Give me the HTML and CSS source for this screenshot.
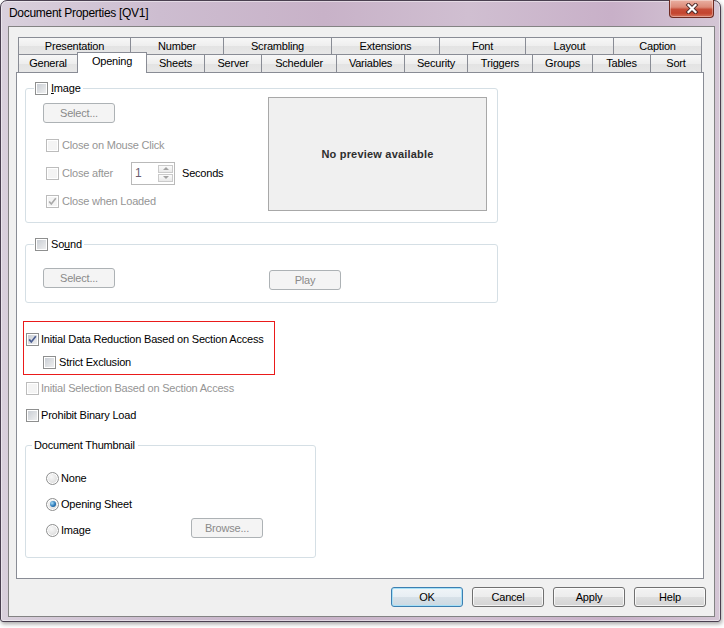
FILE: index.html
```html
<!DOCTYPE html>
<html>
<head>
<meta charset="utf-8">
<title>Document Properties [QV1]</title>
<link rel="stylesheet" href="styles.css">
</head>
<body>
<div class="window">
  <div class="titlebar">
    <span class="title">Document Properties [QV1]</span>
    <div class="close">
      <svg width="14" height="11" viewBox="0 0 14 11">
        <path d="M3.5 2 L10.5 9 M10.5 2 L3.5 9" stroke="#4a2a2a" stroke-width="4" stroke-linecap="square" fill="none"/>
        <path d="M3.5 2 L10.5 9 M10.5 2 L3.5 9" stroke="#ffffff" stroke-width="2.2" stroke-linecap="square" fill="none"/>
      </svg>
    </div>
  </div>
  <div class="client">
    <div class="tabs">
      <div class="tabrow row1">
        <div class="tab">Presentation</div>
        <div class="tab">Number</div>
        <div class="tab">Scrambling</div>
        <div class="tab">Extensions</div>
        <div class="tab">Font</div>
        <div class="tab">Layout</div>
        <div class="tab">Caption</div>
      </div>
      <div class="tabrow row2">
        <div class="tab">General</div>
        <div class="tab active">Opening</div>
        <div class="tab">Sheets</div>
        <div class="tab">Server</div>
        <div class="tab">Scheduler</div>
        <div class="tab">Variables</div>
        <div class="tab">Security</div>
        <div class="tab">Triggers</div>
        <div class="tab">Groups</div>
        <div class="tab">Tables</div>
        <div class="tab">Sort</div>
      </div>
    </div>
    <div class="panel">
      <div class="group g-image">
        <div class="legend"><span class="cb"></span><span><u>I</u>mage</span></div>
        <div class="gbody">
          <div class="col">
            <div class="btn dis first">Select...</div>
            <div class="row first"><span class="cb dis"></span><span class="lbl dis">Close on Mouse Click</span></div>
            <div class="row"><span class="cb dis"></span><span class="lbl dis w-after">Close after</span>
              <div class="spin"><span class="spinval">1</span>
                <div class="spinbtns"><span class="sb up"></span><span class="sb dn"></span></div>
              </div>
              <span class="lbl seconds">Seconds</span>
            </div>
            <div class="row"><span class="cb dis"><svg width="11" height="11" viewBox="0 0 11 11"><path d="M2.2 5.4 L4.3 8 L8.8 2.2" stroke="#a9a9a9" stroke-width="1.6" fill="none"/></svg></span><span class="lbl dis">Close when Loaded</span></div>
          </div>
          <div class="preview">No preview available</div>
        </div>
      </div>

      <div class="group g-sound">
        <div class="legend"><span class="cb"></span><span>So<u>u</u>nd</span></div>
        <div class="sbody">
          <div class="btn dis sel-btn">Select...</div>
          <div class="btn dis play-btn">Play</div>
        </div>
      </div>

      <div class="redbox">
        <div class="chk"><span class="cb"><svg width="11" height="11" viewBox="0 0 11 11"><path d="M2.2 5.4 L4.3 8 L8.8 2.2" stroke="#4b5e92" stroke-width="1.7" fill="none"/></svg></span><span class="lbl">Initial Data Reduction Based on Section Access</span></div>
        <div class="chk sub"><span class="cb"></span><span class="lbl">Strict Exclusion</span></div>
      </div>

      <div class="chk line sel-line"><span class="cb dis"></span><span class="lbl dis">Initial Selection Based on Section Access</span></div>
      <div class="chk line prohibit"><span class="cb"></span><span class="lbl">Prohibit Binary Load</span></div>

      <div class="group g-thumb">
        <div class="legend text-legend">Document Thumbnail</div>
        <div class="tbody">
          <div class="rrow"><span class="rb"></span><span class="lbl">None</span></div>
          <div class="rrow"><span class="rb on"></span><span class="lbl">Opening Sheet</span></div>
          <div class="rrow img"><span class="rb"></span><span class="lbl">Image</span><div class="btn dis browse">Browse...</div></div>
        </div>
      </div>
    </div>
    <div class="footer">
      <div class="btn default">OK</div>
      <div class="btn">Cancel</div>
      <div class="btn">Apply</div>
      <div class="btn">Help</div>
    </div>
  </div>
</div>
</body>
</html>
```

FILE: styles.css
```css
* { box-sizing: border-box; }
html, body { margin: 0; padding: 0; background: #ffffff; }
body {
  font-family: "Liberation Sans", Arial, sans-serif;
  font-size: 11px;
  letter-spacing: -0.2px;
  color: #000;
  width: 724px;
  height: 628px;
  overflow: hidden;
}

/* window frame */
.window {
  width: 721px;
  height: 622px;
  border: 1px solid #4a4050;
  border-radius: 7px 7px 3px 3px;
  background: linear-gradient(90deg, #d9d0dc 0%, #cdbdd0 22%, #c8b2c8 45%, #d0bfd1 65%, #c8b0c8 85%, #d4c6d5 100%);
  box-shadow: 1px 2px 4px rgba(0,0,0,.35), inset 0 0 0 1px rgba(255,255,255,.45);
  display: flex;
  flex-direction: column;
}
.titlebar {
  height: 25px;
  flex: none;
  display: flex;
  justify-content: space-between;
  align-items: flex-start;
  padding-left: 8px;
}
.title {
  font-size: 12px;
  letter-spacing: -0.3px;
  line-height: 24px;
  color: #000;
}
.close {
  width: 45px;
  height: 18px;
  margin-top: -1px;
  margin-right: 6px;
  border: 1px solid #6e2a22;
  border-top: none;
  border-radius: 0 0 4px 4px;
  background: linear-gradient(#eab0a2 0%, #dc8a78 42%, #c64d38 55%, #c4452f 78%, #d6735c 100%);
  box-shadow: inset 0 0 0 1px rgba(255,255,255,.35);
  display: flex;
  align-items: center;
  justify-content: center;
}

/* client area */
.client {
  margin-left: 7px;
  width: 707px;
  height: 591px;
  flex: none;
  border: 1px solid #838383;
  background: #f0f0f0;
  padding-top: 10px;
}

/* tabs */
.tabs { margin-left: 9px; width: 684px; }
.tabrow { display: grid; }
.row1 { grid-template-columns: 113px 93px 108px 108px 86px 88px 88px; height: 17px; }
.row2 { grid-template-columns: 60px 69px 58px 57px 75px 68px 63px 65px 60px 58px 51px; height: 18px; }
.tab {
  border-top: 1px solid #898c95;
  border-right: 1px solid #898c95;
  background: linear-gradient(#f7f7f7 0%, #eeeeee 50%, #e3e3e3 51%, #e7e7e7 100%);
  text-align: center;
  line-height: 16px;
  white-space: nowrap;
}
.tab:first-child { border-left: 1px solid #898c95; }
.row2 .tab { line-height: 17px; }
.tab.active {
  background: #ffffff;
  margin: -2px 0 -1px -1px;
  border-left: 1px solid #898c95;
  position: relative;
  z-index: 1;
  line-height: 16px;
}

/* panel */
.panel {
  margin-left: 7px;
  width: 688px;
  height: 507px;
  border: 1px solid #898c95;
  background: #fff;
  display: flow-root;
}

.group {
  border: 1px solid #d5dfe5;
  border-radius: 3px;
  margin-left: 8px;
}
.legend {
  display: flex;
  align-items: center;
  gap: 3px;
  width: max-content;
  height: 13px;
  line-height: 13px;
  margin: -7px 0 0 8px;
  padding: 0 2px 0 1px;
  background: #fff;
}
.text-legend { margin-left: 6px; padding: 0 3px 0 2px; }

.g-image { width: 473px; margin-top: 15px; padding: 0 10px 7px 0; }
.gbody { display: flex; justify-content: space-between; padding-left: 17px; }
.col .btn.first { margin-top: 8px; }
.row { display: flex; align-items: center; height: 28px; margin-left: 3px; gap: 3px; }
.row.first { margin-top: 8px; }
.w-after { width: 66px; }
.seconds { margin-left: 4px; }
.preview {
  margin-top: 2px;
  width: 219px;
  height: 114px;
  border: 1px solid #a8a8a8;
  background: #f0f0f0;
  display: flex;
  align-items: center;
  justify-content: center;
  font-weight: bold;
  letter-spacing: 0.2px;
  color: #2e2e2e;
}

.spin {
  width: 44px;
  height: 23px;
  border: 1px solid #b9b9b9;
  background: #fff;
  display: flex;
  align-items: center;
  justify-content: space-between;
  padding: 0 1px 0 3px;
}
.spinval { font-size: 12px; color: #6a5c70; }
.spinbtns { display: flex; flex-direction: column; gap: 1px; }
.sb {
  width: 15px;
  height: 8px;
  border: 1px solid #cacaca;
  background: linear-gradient(#fbfbfb, #e9e9e9);
  display: flex;
  align-items: center;
  justify-content: center;
}
.sb::after { content: ""; width: 0; height: 0; border-left: 3px solid transparent; border-right: 3px solid transparent; }
.sb.up::after { border-bottom: 3px solid #a3a3a3; }
.sb.dn::after { border-top: 3px solid #a3a3a3; }

.g-sound { width: 473px; margin-top: 21px; padding-bottom: 12px; }
.sbody { display: flex; align-items: flex-start; padding-left: 17px; }
.sel-btn { margin-top: 17px; }
.play-btn { margin-top: 19px; margin-left: 154px; }

/* red highlight */
.redbox {
  margin: 18px 0 0 6px;
  width: 252px;
  height: 54px;
  border: 1px solid #ea1a1a;
  padding: 11px 0 0 2px;
}
.chk { display: flex; align-items: center; gap: 3px; height: 13px; line-height: 13px; white-space: nowrap; }
.chk .lbl { margin-left: -1px; }
.chk.sub { margin: 10px 0 0 17px; }
.chk.sub .lbl { margin-left: 0; }
.line { margin-left: 9px; }
.sel-line { margin-top: 7px; }
.prohibit { margin-top: 14px; }

.g-thumb { width: 291px; margin-top: 23px; padding-bottom: 14px; }
.tbody { margin-top: 13px; padding-left: 20px; }
.rrow { display: flex; align-items: center; gap: 2px; height: 26px; }
.rrow.img { margin-right: 52px; }
.browse { margin-left: auto; align-self: flex-start; margin-top: 1px; }

/* controls */
.lbl { white-space: nowrap; }
.dis { color: #959595; }
.cb {
  width: 13px;
  height: 13px;
  flex: none;
  border: 1px solid #8e8f8f;
  background: linear-gradient(135deg, #c6cbd2 0%, #f2f2f2 100%);
  box-shadow: inset 0 0 0 1px #ffffff;
  display: flex;
  align-items: center;
  justify-content: center;
}
.cb.dis { border-color: #bcbcbc; background: #f4f4f4; }
.cb svg { display: block; }
.rb {
  width: 13px;
  height: 13px;
  flex: none;
  border-radius: 50%;
  border: 1px solid #8e8f8f;
  background: radial-gradient(circle at 40% 35%, #f8f8f8 0%, #d2d2d2 100%);
  box-shadow: inset 0 0 0 1px #fff;
  display: flex;
  align-items: center;
  justify-content: center;
}
.rb.on::after {
  content: "";
  width: 6px;
  height: 6px;
  border-radius: 50%;
  background: radial-gradient(circle at 35% 35%, #a9def9 0%, #2a78b8 55%, #124a80 100%);
}

.btn {
  width: 72px;
  height: 20px;
  flex: none;
  border: 1px solid #707070;
  border-radius: 3px;
  background: linear-gradient(#f3f3f3 0%, #ececec 50%, #dedede 51%, #d4d4d4 100%);
  box-shadow: inset 0 0 0 1px rgba(255,255,255,.75);
  text-align: center;
  line-height: 18px;
  color: #000;
}
.btn.dis {
  border-color: #adb2b5;
  background: #f4f4f4;
  box-shadow: none;
  color: #8a8a8a;
}
.btn.default {
  border-color: #3c7fb1;
  box-shadow: inset 0 0 0 1px #a6e0f7;
  background: linear-gradient(#f0f5f8 0%, #e7eef3 50%, #d7e1e8 51%, #ccd9e2 100%);
}

.footer {
  display: flex;
  justify-content: flex-end;
  gap: 9px;
  margin-top: 8px;
  padding-right: 8px;
}
```
